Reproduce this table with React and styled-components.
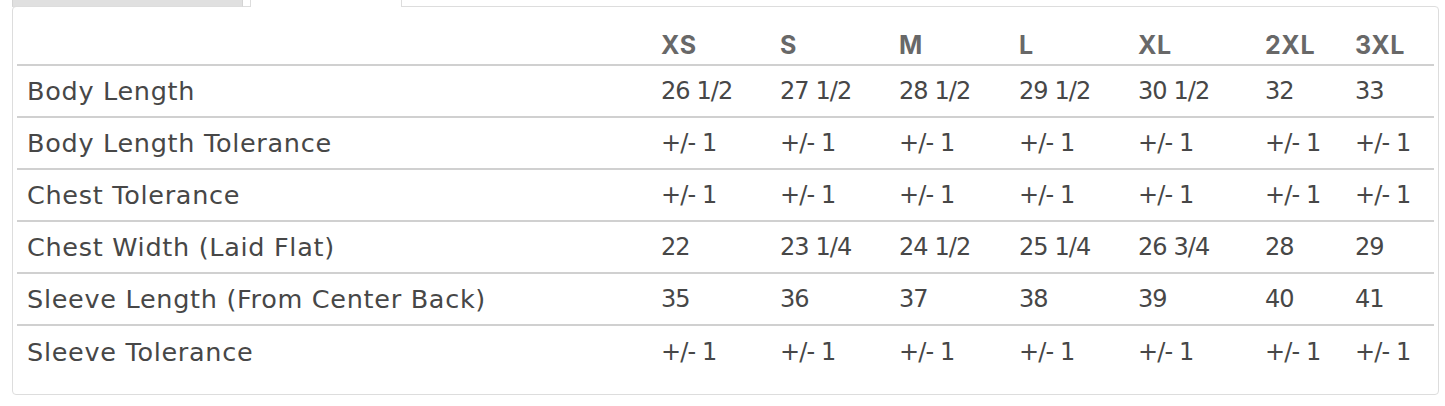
import React from "react";
import styled, { createGlobalStyle } from "styled-components";

const Global = createGlobalStyle`
  html, body { margin: 0; padding: 0; background: #fff; }
  body { font-family: "DejaVu Sans", Inter, sans-serif; }
`;

const Wrap = styled.div`
  width: 1427px;
  padding-left: 12px;
`;

const TabList = styled.div`
  display: flex;
  align-items: flex-end;
  height: 7px;
  margin-bottom: -1px;
  position: relative;
  z-index: 1;
`;

const Tab = styled.div`
  box-sizing: border-box;
  height: ${(p) => (p.$active ? "8px" : "7px")};
  width: ${(p) => p.$w}px;
  margin-right: ${(p) => p.$gap || 0}px;
  background: ${(p) => (p.$active ? "#fff" : "#e0e0e0")};
  border: 1px solid ${(p) => (p.$active ? "#ddd" : "#d4d4d4")};
  border-top: none;
  border-bottom: ${(p) => (p.$active ? "none" : "1px solid #ddd")};
`;

const Panel = styled.div`
  box-sizing: border-box;
  border: 1px solid #ddd;
  border-radius: 4px;
  padding: 6px 4px 16px 4px;
  height: 389px;
`;

const Table = styled.table`
  width: 100%;
  table-layout: fixed;
  border-collapse: collapse;
  color: #474747;
`;

const Col = styled.col`
  width: ${(p) => p.$w}px;
`;

const HeadCell = styled.th`
  height: 52px;
  box-sizing: border-box;
  text-align: left;
  vertical-align: bottom;
  padding: 0 0 4px 10px;
  font-weight: 700;
  font-family: Inter, sans-serif;
  font-size: 25px;
  letter-spacing: 0.6px;
  color: #686868;
  border-bottom: 2px solid #d0d0d0;
  white-space: nowrap;
`;

const Cell = styled.td`
  height: 52px;
  box-sizing: border-box;
  padding: 0 0 0 10px;
  vertical-align: middle;
  white-space: nowrap;
  font-weight: 400;
  font-size: ${(p) => (p.$num ? "24px" : "25.5px")};
  letter-spacing: ${(p) => (p.$num ? "-0.9px" : "0.7px")};
  border-bottom: ${(p) => (p.$last ? "none" : "2px solid #d0d0d0")};
`;

const sizes = ["XS", "S", "M", "L", "XL", "2XL", "3XL"];
const widths = [634, 119, 119, 120, 119, 127, 90, 89];
const pm = "+/- 1";
const rows = [
  ["Body Length", ["26 1/2", "27 1/2", "28 1/2", "29 1/2", "30 1/2", "32", "33"]],
  ["Body Length Tolerance", [pm, pm, pm, pm, pm, pm, pm]],
  ["Chest Tolerance", [pm, pm, pm, pm, pm, pm, pm]],
  ["Chest Width (Laid Flat)", ["22", "23 1/4", "24 1/2", "25 1/4", "26 3/4", "28", "29"]],
  ["Sleeve Length (From Center Back)", ["35", "36", "37", "38", "39", "40", "41"]],
  ["Sleeve Tolerance", [pm, pm, pm, pm, pm, pm, pm]],
];

export default function App() {
  return (
    <Wrap>
      <Global />
      <TabList>
        <Tab $w={231} $gap={7} />
        <Tab $active $w={152} />
      </TabList>
      <Panel>
        <Table>
          <colgroup>
            {widths.map((w, i) => (
              <Col key={i} $w={w} />
            ))}
          </colgroup>
          <thead>
            <tr>
              <HeadCell />
              {sizes.map((s) => (
                <HeadCell key={s}>{s}</HeadCell>
              ))}
            </tr>
          </thead>
          <tbody>
            {rows.map(([label, vals], ri) => (
              <tr key={label}>
                <Cell $last={ri === rows.length - 1}>{label}</Cell>
                {vals.map((v, i) => (
                  <Cell key={i} $num $last={ri === rows.length - 1}>
                    {v}
                  </Cell>
                ))}
              </tr>
            ))}
          </tbody>
        </Table>
      </Panel>
    </Wrap>
  );
}
